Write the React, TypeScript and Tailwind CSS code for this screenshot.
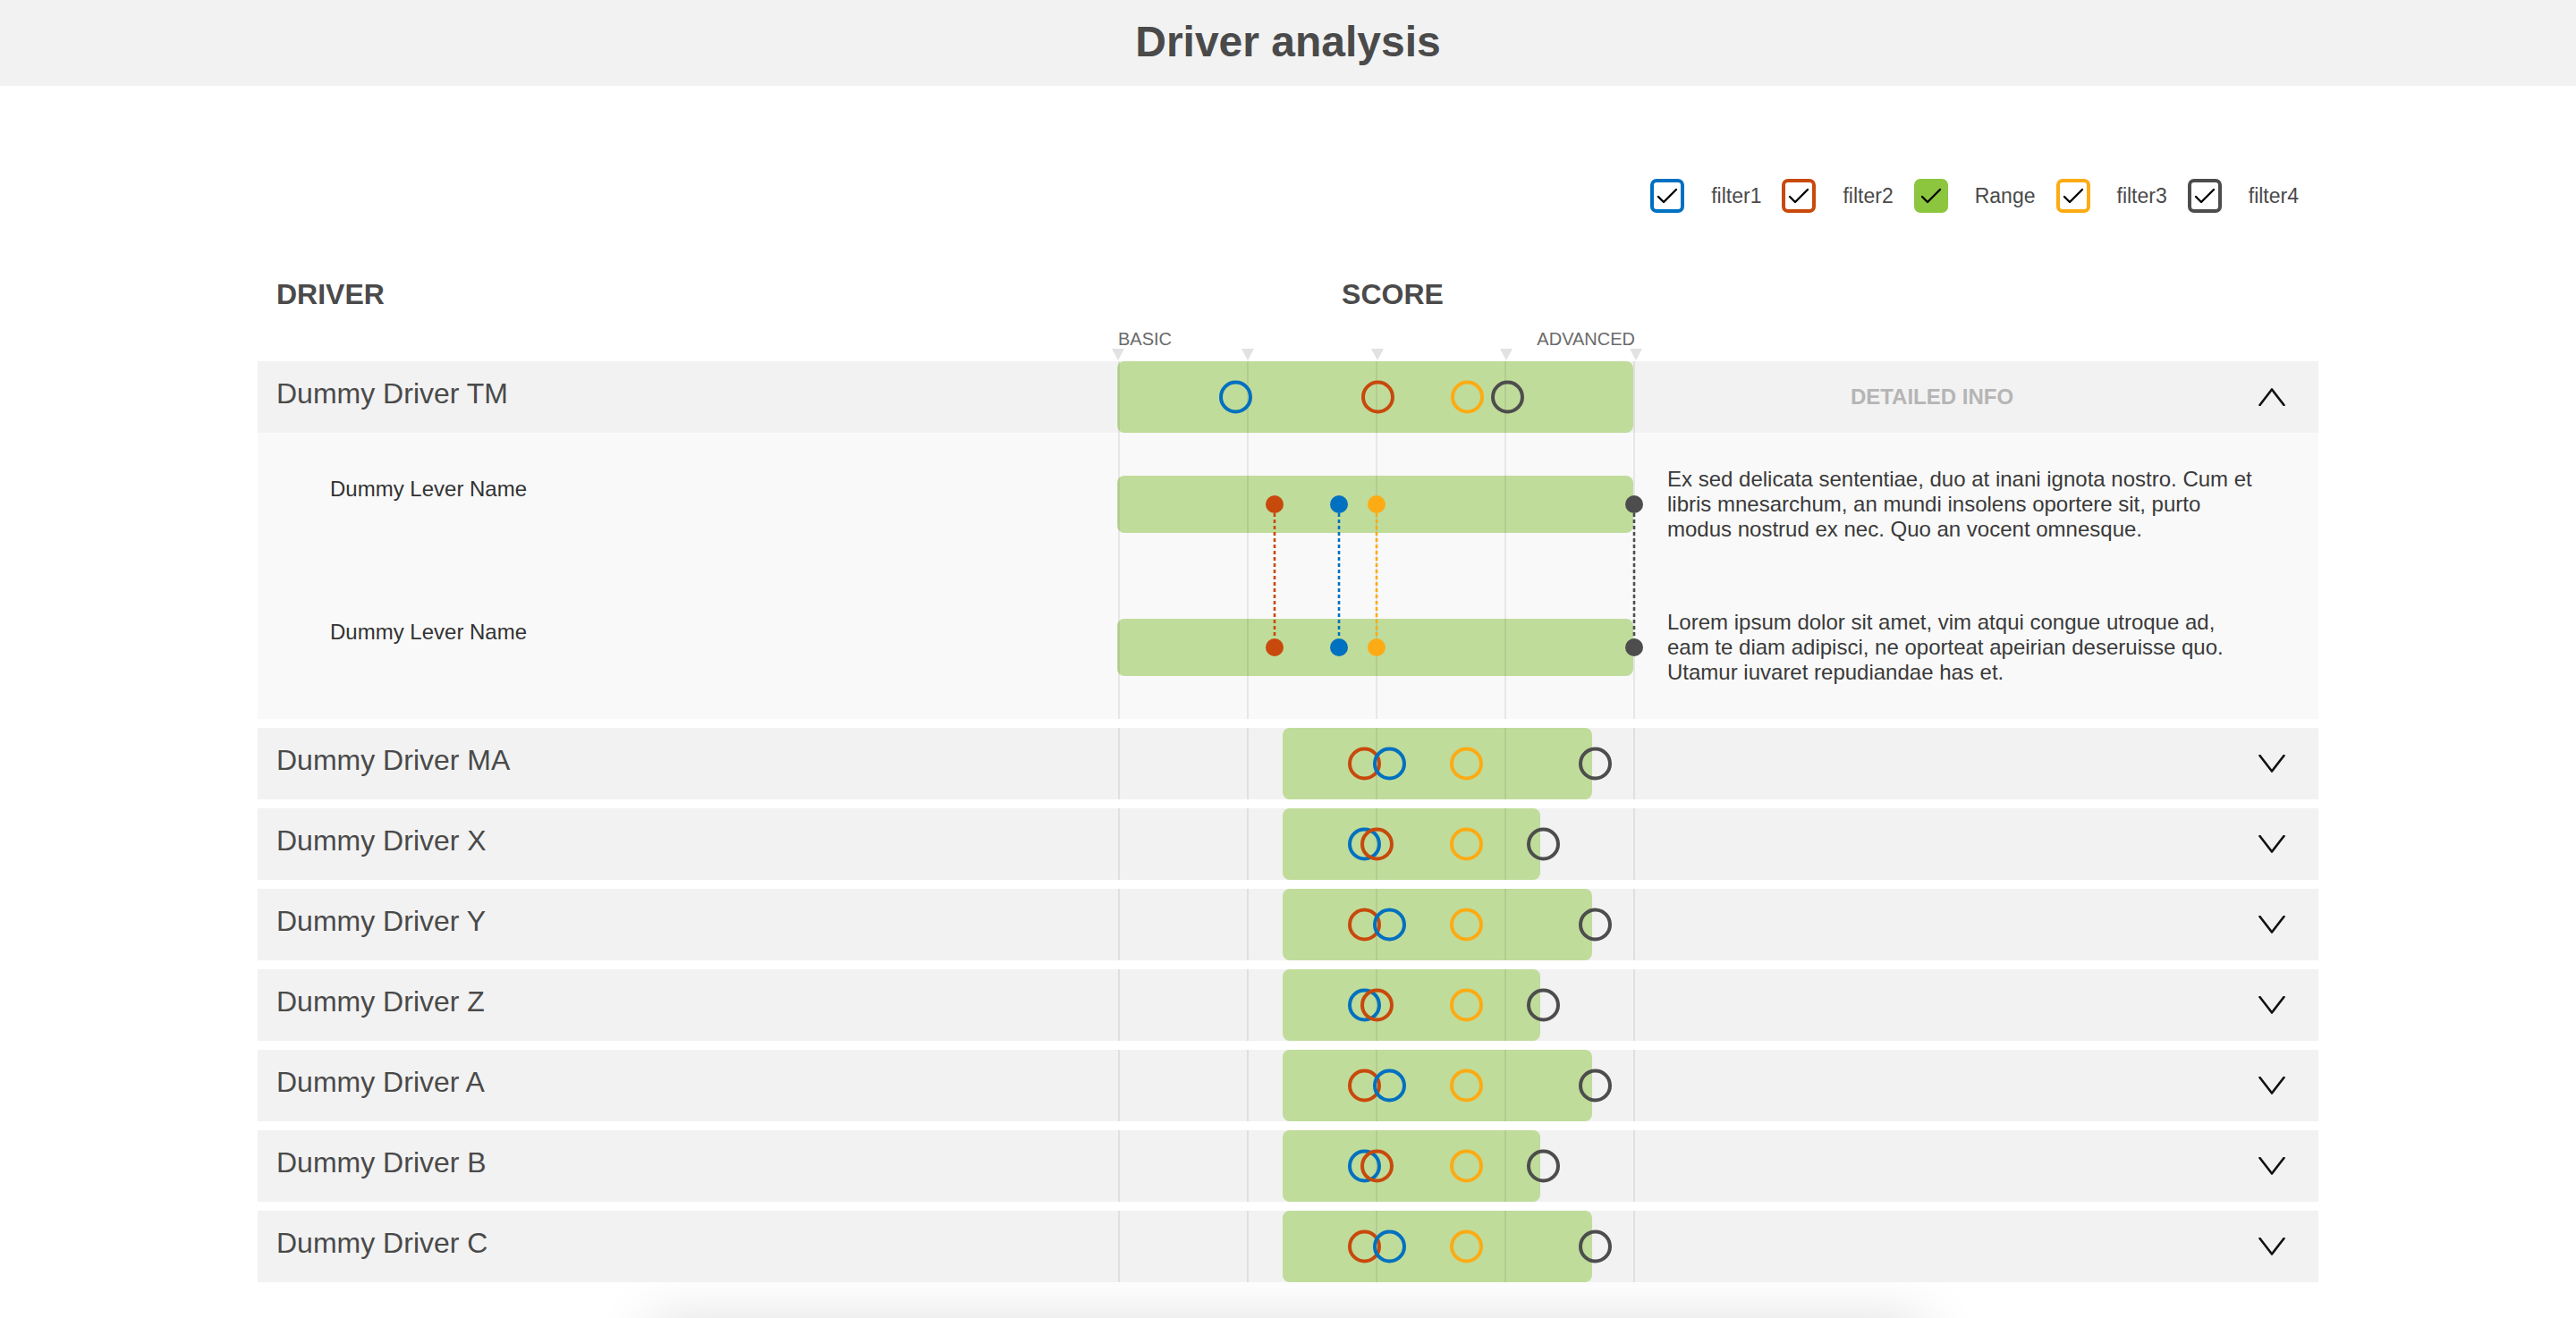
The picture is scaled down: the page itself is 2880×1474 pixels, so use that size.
const BLUE = "#0070c0";
const RED = "#c8490c";
const ORANGE = "#fcab14";
const DARK = "#4d4d4d";

type Mark = { color: string; x: number };
type Driver = { name: string; bar: [number, number]; marks: Mark[]; open?: boolean };

const FILTERS = [
  { label: "filter1", box: "border-[#0070c0]" },
  { label: "filter2", box: "border-[#c8490c]" },
  { label: "Range", box: "border-[#8cc63f] bg-[#8cc63f]" },
  { label: "filter3", box: "border-[#fcab14]" },
  { label: "filter4", box: "border-[#4d4d4d]" },
];

// bar = [offset, width] in px on the 578px score scale
const WIDE: Pick<Driver, "bar" | "marks"> = {
  bar: [184, 346],
  marks: [
    { color: RED, x: 275 },
    { color: BLUE, x: 303 },
    { color: ORANGE, x: 389 },
    { color: DARK, x: 533 },
  ],
};

const NARROW: Pick<Driver, "bar" | "marks"> = {
  bar: [184, 288],
  marks: [
    { color: BLUE, x: 275 },
    { color: RED, x: 289 },
    { color: ORANGE, x: 389 },
    { color: DARK, x: 475 },
  ],
};

const DRIVERS: Driver[] = [
  {
    name: "Dummy Driver TM",
    open: true,
    bar: [-1, 577],
    marks: [
      { color: BLUE, x: 131 },
      { color: RED, x: 290 },
      { color: ORANGE, x: 390 },
      { color: DARK, x: 435 },
    ],
  },
  { name: "Dummy Driver MA", ...WIDE },
  { name: "Dummy Driver X", ...NARROW },
  { name: "Dummy Driver Y", ...WIDE },
  { name: "Dummy Driver Z", ...NARROW },
  { name: "Dummy Driver A", ...WIDE },
  { name: "Dummy Driver B", ...NARROW },
  { name: "Dummy Driver C", ...WIDE },
];

const LEVER_DOTS = [
  { color: RED, x: 175 },
  { color: BLUE, x: 247 },
  { color: ORANGE, x: 289 },
  { color: DARK, x: 577 },
];

function GridLines() {
  return (
    <div className="pointer-events-none absolute inset-0 flex justify-between">
      {[0, 1, 2, 3, 4].map((i) => (
        <span key={i} className="h-full w-[2px] bg-black/[0.07]" />
      ))}
    </div>
  );
}

function Chevron({ up }: { up: boolean }) {
  return (
    <svg width="30" height="20" viewBox="0 0 30 20" fill="none" stroke="#111" strokeWidth="2.6" strokeLinecap="round" strokeLinejoin="round">
      <polyline points={up ? "1.5,19 15,1.5 28.5,19" : "1.5,1 15,18.5 28.5,1"} />
    </svg>
  );
}

function DriverRow({ name, bar, marks, open }: Driver) {
  return (
    <div className="flex h-[80px] bg-[#f2f2f2]">
      <div className="flex w-[962px] items-center pb-[8px] pl-[21px] text-[32px] leading-none text-[#4a4a4a]">{name}</div>
      <div className="relative w-[578px]">
        <div className="h-full rounded-[8px] bg-[#c0dc9b]" style={{ marginLeft: bar[0], width: bar[1] }} />
        <GridLines />
        {marks.map((m) => (
          <span
            key={m.color}
            className="absolute top-1/2 h-[37px] w-[37px] -translate-y-1/2 rounded-full border-[4px]"
            style={{ left: m.x - 18.5, borderColor: m.color }}
          />
        ))}
      </div>
      <div className="flex w-[664px] items-center justify-center text-[24px] font-bold text-[#b5b5b5]">
        {open ? "DETAILED INFO" : null}
      </div>
      <div className="flex flex-1 items-center pl-[33px]">
        <Chevron up={!!open} />
      </div>
    </div>
  );
}

function Levers() {
  return (
    <div className="flex h-[320px] bg-[#f9f9f9]">
      <div className="flex w-[962px] flex-col gap-[132px] pl-[81px] pt-[49px] text-[24px] leading-[28px] text-[#333]">
        <p>Dummy Lever Name</p>
        <p>Dummy Lever Name</p>
      </div>

      <div className="relative flex w-[578px] flex-col gap-[96px] pt-[48px]">
        <div className="-ml-px h-[64px] w-[577px] rounded-[8px] bg-[#c0dc9b]" />
        <div className="-ml-px h-[64px] w-[577px] rounded-[8px] bg-[#c0dc9b]" />
        <GridLines />
        <svg className="absolute left-0 top-0 overflow-visible" width="578" height="320">
          {LEVER_DOTS.map((d) => (
            <g key={d.color} fill={d.color} stroke={d.color}>
              <line x1={d.x} y1={90} x2={d.x} y2={230} strokeWidth="2.6" strokeDasharray="4 3" />
              <circle cx={d.x} cy={80} r={10} stroke="none" />
              <circle cx={d.x} cy={240} r={10} stroke="none" />
            </g>
          ))}
        </svg>
      </div>

      <div className="flex flex-1 flex-col gap-[76px] pl-[36px] pt-[38px] text-[24px] leading-[28px] text-[#3a3a3a]">
        <p className="w-[662px]">
          Ex sed delicata sententiae, duo at inani ignota nostro. Cum et libris mnesarchum, an mundi insolens oportere sit, purto modus nostrud ex nec. Quo an vocent omnesque.
        </p>
        <p className="w-[662px]">
          Lorem ipsum dolor sit amet, vim atqui congue utroque ad, eam te diam adipisci, ne oporteat apeirian deseruisse quo. Utamur iuvaret repudiandae has et.
        </p>
      </div>
    </div>
  );
}

export default function App() {
  return (
    <div className="min-h-screen overflow-hidden bg-white font-['Liberation_Sans',Arial,sans-serif]">
      <header className="flex h-[96px] items-center justify-center bg-[#f2f2f2] pb-[3px]">
        <h1 className="text-[48px] font-bold leading-none text-[#4a4a4a]">Driver analysis</h1>
      </header>

      <main className="mx-auto w-[2304px]">
        {/* Filters */}
        <div className="flex justify-end pr-[22px] pt-[104px]">
          {FILTERS.map(({ label, box }, i) => (
            <div key={label} className="flex items-center">
              <span className={`flex h-[38px] w-[38px] items-center justify-center rounded-[7px] border-[4px] ${box}`}>
                <svg width="30" height="30" viewBox="0 0 30 30" fill="none" stroke="#000" strokeWidth="2.4" strokeLinecap="round" strokeLinejoin="round">
                  <polyline points="5,16 11,22 25,8" />
                </svg>
              </span>
              <span className={`ml-[30px] text-[23px] text-[#4a4a4a] ${i < FILTERS.length - 1 ? "mr-[23px]" : ""}`}>{label}</span>
            </div>
          ))}
        </div>

        {/* Column headings */}
        <div className="mt-[75px] flex text-[32px] font-bold leading-none text-[#4a4a4a]">
          <div className="w-[962px] pl-[21px]">DRIVER</div>
          <div className="w-[578px] pl-[36px] text-center">SCORE</div>
        </div>

        {/* Scale */}
        <div className="ml-[962px] mt-[24px] flex w-[578px] justify-between text-[20px] leading-none text-[#6b6b6b]">
          <span>BASIC</span>
          <span>ADVANCED</span>
        </div>
        <div className="ml-[955px] mt-[1px] flex h-[14px] w-[593px] justify-between">
          {[0, 1, 2, 3, 4].map((i) => (
            <span key={i} className="h-0 w-0 border-x-[7px] border-t-[13px] border-x-transparent border-t-[#e2e2e2]" />
          ))}
        </div>

        {/* Rows */}
        <div className="flex flex-col gap-[10px]">
          {DRIVERS.map((d) => (
            <div key={d.name}>
              <DriverRow {...d} />
              {d.open && <Levers />}
            </div>
          ))}
        </div>
      </main>

      <div className="mx-auto mt-[56px] h-[200px] w-[1400px] bg-white shadow-[0_0_60px_12px_rgba(0,0,0,0.14)]" />
    </div>
  );
}
